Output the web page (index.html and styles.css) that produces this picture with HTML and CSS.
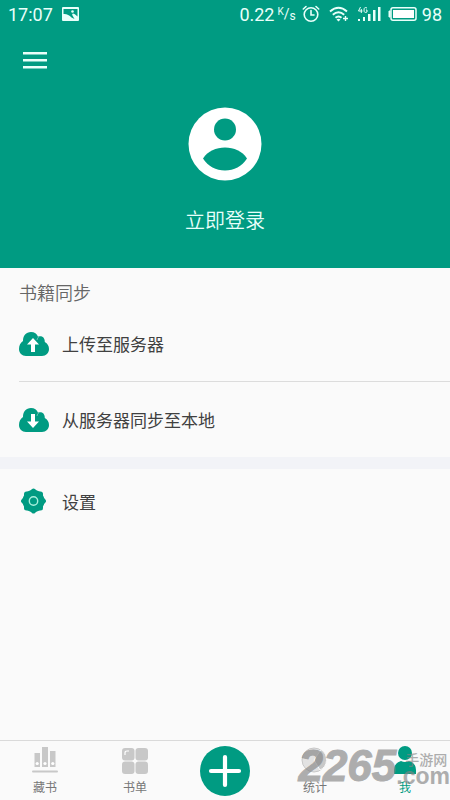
FILE: index.html
```html
<!DOCTYPE html>
<html lang="zh-CN">
<head>
<meta charset="utf-8">
<meta name="viewport" content="width=device-width, initial-scale=1">
<title>我</title>
<link rel="stylesheet" href="styles.css">
</head>
<body>
<div class="app">
  <header class="hero">
    <div class="status">
      <span>17:07</span>
      <svg class="status-photo" width="17" height="14" viewBox="0 0 17 14"><rect width="17" height="14" rx="1" fill="#e9fffa"/><path d="M1.500 2h14v7.500q-3-3-4.500-3-1.500.5-.5 2l2 3.500-3-1.500Q6 6.500 1.500 7z" fill="#009b82"/><circle cx="10.500" cy="4.500" r="1.300" fill="#e9fffa"/></svg>
      <span class="spacer"></span>
      <span>0.22</span>
      <span class="unit"><sup>K</sup>/<sub>s</sub></span>
      <svg class="status-alarm" width="18" height="18" viewBox="0 0 18 18" fill="none" stroke="#e9fffa" stroke-width="1.600" stroke-linecap="round"><circle cx="9" cy="9.500" r="6.800"/><path d="M9 5.500v4.500h3M1.300 4 4 1.500M16.700 4 14 1.500"/></svg>
      <svg class="status-wifi" width="20" height="16" viewBox="0 0 20 16" fill="none" stroke="#e9fffa" stroke-width="1.900"><path d="M1 5.500Q9.500-2 18 5.500M3.800 8.700q5.700-5 11.400 0M6.500 11.700q3-2.600 6 0"/><path d="m9.500 15.500-2-2q2-1.500 4 0z" fill="#e9fffa" stroke="none"/><path d="M16.500 10v5M14 12.500h5" stroke-width="1.400"/></svg>
      <svg class="status-signal" width="24" height="16" viewBox="0 0 24 16" fill="#e9fffa"><path d="M1 13h2v2H1zM6 11h2v4H6zM11 8h2.500v7H11zM16 4h2.500v11H16zM21 1h2.500v14H21z"/><path d="M3.500 1 1.500 5h4M4.300 3v4M10 2Q7 .5 7 4t3 2V4H9" fill="none" stroke="#e9fffa"/></svg>
      <svg class="status-battery" width="29" height="14" viewBox="0 0 29 14"><rect x="3" y=".75" width="25" height="12.500" rx="2" fill="none" stroke="#e9fffa" stroke-width="1.500"/><rect x="5" y="3" width="21" height="8" fill="#fff"/><path d="M2 4H1v6h1z" stroke="#e9fffa" fill="#e9fffa"/></svg>
      <span>98</span>
    </div>
    <button class="menu" type="button" aria-label="菜单">
      <svg width="24" height="18" viewBox="0 0 24 18" fill="#e9fffa"><path d="M0 1h24v2.500H0zM0 8h24v2.500H0zM0 15h24v2.500H0z"/></svg>
    </button>
    <button class="login" type="button">
      <svg width="74" height="74" viewBox="0 0 74 74"><circle cx="37" cy="37" r="36.500" fill="#fff"/><circle cx="37" cy="22.500" r="11" fill="#009b82"/><path d="M15 51.500C20 44 28 40.500 37 40.500S54 44 59 51.500C54 59.500 46 63.500 37 63.500S20 59.500 15 51.500z" fill="#009b82"/></svg>
      <span>立即登录</span>
    </button>
  </header>
  <main>
    <section>
      <h2 class="title">书籍同步</h2>
      <button class="row" type="button">
        <svg width="30" height="26" viewBox="0 0 30 26"><path d="M7 25C3 25 0 22 0 18 0 14.500 1.500 11.500 4 10 4 4.500 7 1 12 1c3.500 0 6 2 7 4.800C22 4.500 26 6 25.800 11 28.500 12.500 30 15 30 18c0 4-3 7-7 7z" fill="#009b82"/><path d="M18 9Q18.300 7 20 5.500" fill="none" stroke="#7fcdc0" stroke-width=".8"/><path d="m14 7 6 6.500h-4V21h-4v-7.500H8z" fill="#fff"/></svg>
        <span>上传至服务器</span>
      </button>
      <hr class="line">
      <button class="row" type="button">
        <svg width="30" height="26" viewBox="0 0 30 26"><path d="M7 25C3 25 0 22 0 18 0 14.500 1.500 11.500 4 10 4 4.500 7 1 12 1c3.500 0 6 2 7 4.800C22 4.500 26 6 25.800 11 28.500 12.500 30 15 30 18c0 4-3 7-7 7z" fill="#009b82"/><path d="M18 9Q18.300 7 20 5.500" fill="none" stroke="#7fcdc0" stroke-width=".8"/><path d="m14 21-6-6.500h4V7h4v7.500h4z" fill="#fff"/></svg>
        <span>从服务器同步至本地</span>
      </button>
    </section>
    <section class="settings">
      <button class="row row-short" type="button">
        <svg width="30" height="28" viewBox="0 0 30 28"><g fill="#009b82"><circle cx="14.500" cy="14" r="11"/><rect x="5" y="4.500" width="19" height="19" rx="2.500"/><rect x="5" y="4.500" width="19" height="19" rx="2.500" transform="rotate(45 14.500 14)"/></g><circle cx="14.500" cy="14" r="4.200" fill="none" stroke="#a8f0dd" stroke-width="1.400"/></svg>
        <span>设置</span>
      </button>
    </section>
  </main>
  <nav class="tabs">
    <a class="tab" href="#books">
      <svg width="26" height="28" viewBox="0 0 26 28"><path d="M2.500 7h5.500v14H2.500zM10 1h6v20h-6zM18 5h5.500v16H18z" fill="#c8c8c8"/><path d="M1 25.500h24" stroke="#c8c8c8" stroke-width="2" stroke-linecap="round"/><g fill="#fff"><circle cx="5.200" cy="17.500" r="1.600"/><circle cx="13" cy="17.500" r="1.600"/><circle cx="20.800" cy="17.500" r="1.600"/></g></svg>
      <span>藏书</span>
    </a>
    <a class="tab" href="#lists">
      <svg width="26" height="28" viewBox="0 0 26 28"><g fill="#c8c8c8"><rect x="0" y="2" width="12.500" height="12.500" rx="3"/><rect x="13.500" y="2" width="12.500" height="12.500" rx="3"/><rect x="0" y="15.500" width="12.500" height="12.500" rx="3"/><rect x="13.500" y="15.500" width="12.500" height="12.500" rx="3"/></g><path d="M3 9V7q0-2 2-2h2" fill="none" stroke="#fff" stroke-width="1.200"/></svg>
      <span>书单</span>
    </a>
    <button class="add" type="button" aria-label="添加"><svg width="50" height="50" viewBox="0 0 50 50"><circle cx="25" cy="25" r="25" fill="#009b82"/><path d="M25 11v28M11 25h28" stroke="#fff" stroke-width="4.200" stroke-linecap="round"/></svg></button>
    <a class="tab" href="#stats">
      <svg width="28" height="28" viewBox="0 0 28 28"><circle cx="13" cy="14" r="12" fill="#e2e2e2" stroke="#c8c8c8"/><path d="M13 14 20 3.500q6 4 5.500 11T19 24z" fill="#c8c8c8" stroke="#fafafa"/></svg>
      <span>统计</span>
    </a>
    <a class="tab tab-active" href="#me">
      <svg width="26" height="28" viewBox="0 0 26 28" fill="#009b82"><circle cx="13" cy="7" r="7"/><path d="M2 28v-4q0-7 7-9 4 2 8 0 7 2 7 9v4z"/></svg>
      <span>我</span>
    </a>
    <div class="watermark"><span class="mark-number">2265</span><span class="mark-side"><span class="mark-name">手游网</span><span class="mark-domain">.com</span></span></div>
  </nav>
</div>
</body>
</html>
```
FILE: styles.css
```css
* { box-sizing: border-box; }
body {
  margin: 0;
  background: #fafafa;
  color: #404040;
  font-family: Roboto, "Noto Sans CJK SC", sans-serif;
}
button {
  border: 0;
  padding: 0;
  background: none;
  color: inherit;
  font: inherit;
}
svg { display: block; flex: none; }
.app {
  display: flex;
  flex-direction: column;
  min-height: 100vh;
}
main { flex: 1; }

.hero {
  display: flex;
  flex-direction: column;
  align-items: flex-start;
  padding-bottom: 32px;
  background: #009b82;
  color: #e9fffa;
}
.status {
  display: flex;
  align-items: center;
  align-self: stretch;
  height: 28px;
  padding: 0 8px;
  font-size: 18px;
}
.spacer { flex: 1; }
.status-photo { margin-left: 9px; }
.unit {
  display: flex;
  align-items: center;
  margin: 0 6px 0 3px;
  font-size: 14px;
}
.unit sup, .unit sub { font-size: 10px; line-height: 12px; }
.unit sup { align-self: flex-start; }
.unit sub { font-size: 12px; align-self: flex-end; }
.status-wifi { margin-left: 9px; }
.status-signal { margin-left: 8px; }
.status-battery { margin: 0 5px 0 7px; }
.menu { padding: 23px; height: 64px; }
.login {
  display: flex;
  flex-direction: column;
  align-items: center;
  gap: 25px;
  align-self: center;
  margin-top: 15px;
  font-size: 20px;
  font-weight: 350;
  line-height: 30px;
}

.title {
  margin: 0;
  padding: 14px 19px 0;
  color: #666;
  font-size: 18px;
  font-weight: 350;
  line-height: 24px;
}
.row {
  display: flex;
  align-items: center;
  gap: 13px;
  width: 100%;
  height: 75px;
  padding: 0 19px;
  font-size: 17px;
  text-align: left;
}
.row-short { height: 64px; }
.line {
  height: 1px;
  margin: 0 0 0 19px;
  border: 0;
  background: #dcdcdc;
}
.settings { border-top: 12px solid #f2f3f7; }

.tabs {
  position: relative;
  display: grid;
  grid-template-columns: repeat(5, 1fr);
  height: 60px;
  border-top: 1px solid #dadada;
}
.tab {
  display: flex;
  flex-direction: column;
  align-items: center;
  gap: 5px;
  padding-top: 5px;
  color: #777;
  font-size: 12px;
  line-height: 18px;
  text-decoration: none;
}
.tab-active { color: #009b82; }
.add { justify-self: center; align-self: center; }

.watermark {
  position: absolute;
  right: 0;
  bottom: 15px;
  display: flex;
  align-items: flex-end;
  color: #858585;
  font-family: "Liberation Sans", "Noto Sans CJK SC", sans-serif;
  font-weight: 700;
  opacity: .65;
  pointer-events: none;
}
.mark-number {
  font-size: 44px;
  font-style: italic;
  line-height: 38px;
  -webkit-text-stroke: 1px #858585;
}
.mark-side { display: flex; flex-direction: column; }
.mark-name { padding-left: 9px; font-size: 14px; line-height: 16px; font-weight: 500; }
.mark-domain { font-size: 23px; line-height: 17px; }
```
